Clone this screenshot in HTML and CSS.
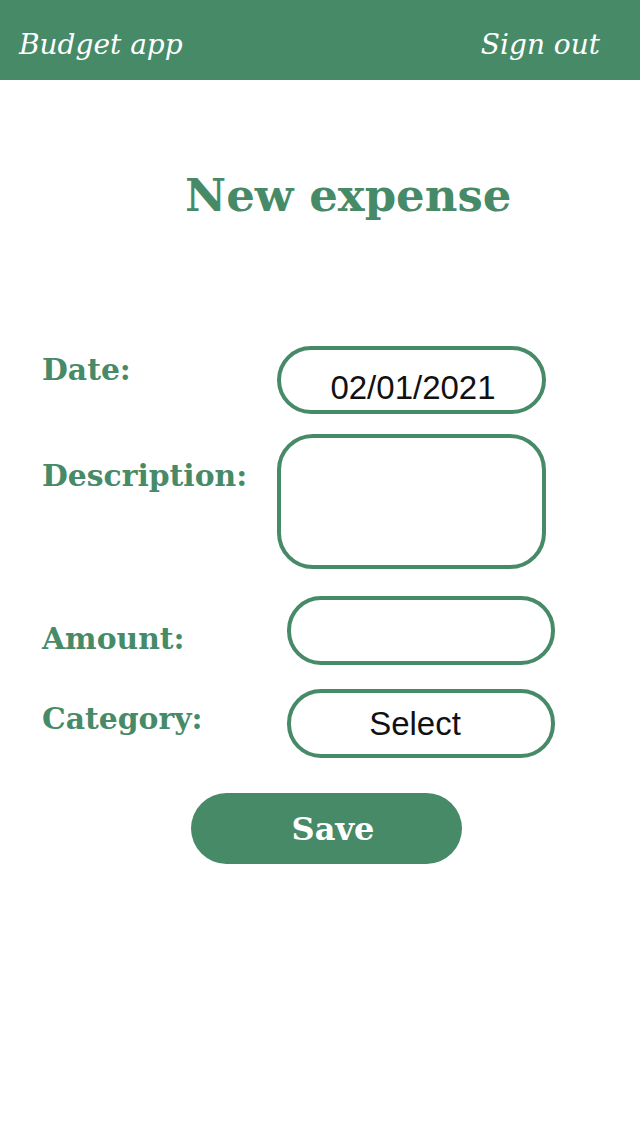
FILE: index.html
```html
<!DOCTYPE html>
<html lang="en">
<head>
<meta charset="utf-8">
<title>Budget app - New expense</title>
<link rel="stylesheet" href="styles.css">
</head>
<body>
<header class="topbar">
  <span class="brand">Budget app</span>
  <span class="signout">Sign out</span>
</header>
<main class="page">
  <h1 class="title">New expense</h1>
  <form class="form">
    <div class="row row-date">
      <label class="label label-date">Date:</label>
      <div class="field field-date">02/01/2021</div>
    </div>
    <div class="row row-desc">
      <label class="label label-desc">Description:</label>
      <div class="field field-desc"></div>
    </div>
    <div class="row row-amount">
      <label class="label label-amount">Amount:</label>
      <div class="field field-amount"></div>
    </div>
    <div class="row row-cat">
      <label class="label label-cat">Category:</label>
      <div class="field field-cat">Select</div>
    </div>
    <div class="actions">
      <button type="button" class="save">Save</button>
    </div>
  </form>
</main>
</body>
</html>
```

FILE: styles.css
```css
* { box-sizing: border-box; }
html, body { margin: 0; padding: 0; background: #ffffff; }
body { width: 640px; height: 1136px; font-family: "DejaVu Serif", "Liberation Serif", serif; }

.topbar {
  height: 80px;
  background: #478a68;
  display: flex;
  justify-content: space-between;
  align-items: center;
  padding: 10px 40px 0 19px;
  color: #ffffff;
  font-family: "DejaVu Serif", serif;
  font-style: italic;
  font-size: 28px;
}
.brand, .signout { line-height: 70px; }

.page { padding-top: 89px; }

.title {
  margin: 0;
  padding-left: 185px;
  font-size: 45px;
  line-height: 54px;
  font-weight: bold;
  color: #478a68;
}

.form {
  margin-top: 123px;
  padding-left: 42px;
  display: flex;
  flex-direction: column;
}

.row { display: flex; align-items: flex-start; }
.row-desc { margin-top: 20px; }
.row-amount { margin-top: 27px; }
.row-cat { margin-top: 24px; }

.label {
  font-weight: bold;
  font-size: 29.8px;
  line-height: 36px;
  color: #478a68;
}
.label-date { width: 235px; padding-top: 6px; }
.label-desc { width: 235px; padding-top: 24px; }
.label-amount { width: 245px; padding-top: 25px; }
.label-cat { width: 245px; padding-top: 12px; }

.field {
  width: 269px;
  height: 68px;
  border: 4px solid #478a68;
  border-radius: 34px;
  display: flex;
  justify-content: center;
  align-items: center;
  font-family: "Liberation Sans", Arial, sans-serif;
  font-size: 33px;
  color: #111111;
}
.field-date { padding: 16px 0 0 3px; }
.field-desc { height: 135px; border-radius: 36px; }
.field-amount { width: 268px; height: 69px; }
.field-cat { width: 268px; height: 69px; padding: 0 12px 0 0; }

.actions { margin-top: 35px; padding-left: 149px; }
.save {
  width: 271px;
  height: 71px;
  border: none;
  border-radius: 36px;
  background: #478a68;
  color: #ffffff;
  font-family: "DejaVu Serif", serif;
  font-weight: bold;
  font-size: 32px;
  padding: 0 0 0 13px;
  cursor: pointer;
}
```
